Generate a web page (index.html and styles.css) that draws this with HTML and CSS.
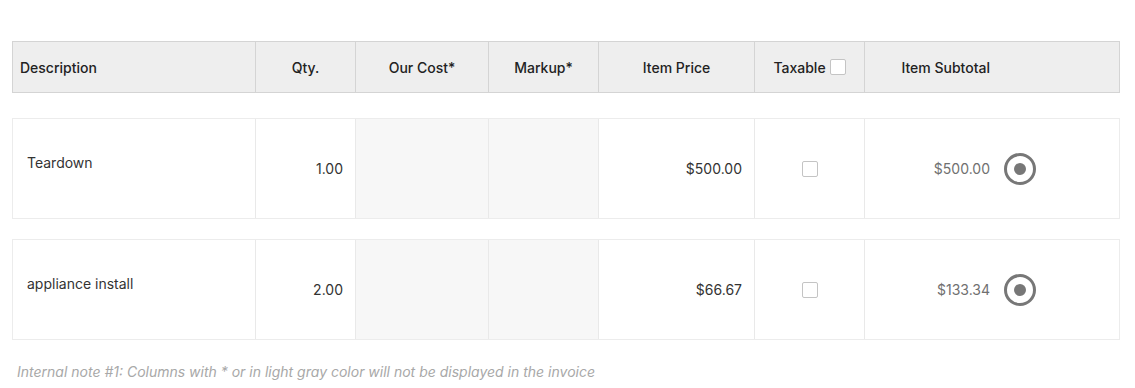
FILE: index.html
```
<!DOCTYPE html>
<html lang="en">
<head>
<meta charset="utf-8">
<title>Line Items</title>
<link rel="stylesheet" href="styles.css">
</head>
<body>

<div class="items">

	<div class="line head">
		<div class="cell desc">Description</div>
		<div class="cell center">Qty.</div>
		<div class="cell center">Our Cost*</div>
		<div class="cell center">Markup*</div>
		<div class="cell center">Item Price</div>
		<div class="cell center">Taxable <span class="box"></span></div>
		<div class="cell subtotal"><span class="amount">Item Subtotal</span></div>
	</div>

	<div class="line row">
		<div class="cell desc">Teardown</div>
		<div class="cell right">1.00</div>
		<div class="cell internal"></div>
		<div class="cell internal"></div>
		<div class="cell right">$500.00</div>
		<div class="cell center"><span class="box"></span></div>
		<div class="cell subtotal">
			<span class="amount muted">$500.00</span>
			<svg class="radio" width="32" height="32" viewBox="0 0 32 32"><circle cx="16" cy="16" r="14.5" fill="none" stroke="#777" stroke-width="3"/><circle cx="16" cy="16" r="6" fill="#777"/></svg>
		</div>
	</div>

	<div class="line row">
		<div class="cell desc">appliance install</div>
		<div class="cell right">2.00</div>
		<div class="cell internal"></div>
		<div class="cell internal"></div>
		<div class="cell right">$66.67</div>
		<div class="cell center"><span class="box"></span></div>
		<div class="cell subtotal">
			<span class="amount muted">$133.34</span>
			<svg class="radio" width="32" height="32" viewBox="0 0 32 32"><circle cx="16" cy="16" r="14.5" fill="none" stroke="#777" stroke-width="3"/><circle cx="16" cy="16" r="6" fill="#777"/></svg>
		</div>
	</div>

	<p class="note">Internal note #1: Columns with * or in light gray color will not be displayed in the invoice</p>

</div>

</body>
</html>
```

FILE: styles.css
```
html, body {
	margin: 0;
	background: #ffffff;
	font-family: Inter, "Liberation Sans", sans-serif;
	font-size: 14px;
	color: #333333;
}

* {
	box-sizing: border-box;
}

.items {
	padding: 41px 15px 0 12px;
}

.line {
	display: grid;
	grid-template-columns: 242px 100px 133px 110px 156px 110px 1fr;
}

.line .cell {
	display: flex;
	align-items: center;
	border-left: 1px solid #e9e9e9;
}

.line .cell:first-child {
	border-left: 0;
}

.head {
	height: 52px;
	background: #eeeeee;
	border: 1px solid #d4d4d4;
	font-weight: 500;
	color: #222222;
}

.head .cell {
	border-left-color: #d4d4d4;
}

.row {
	height: 101px;
	border: 1px solid #ececec;
	margin-top: 20px;
}

.head + .row {
	margin-top: 25px;
}

.cell.desc {
	padding-left: 7px;
}

.row .cell.desc {
	padding-left: 14px;
	padding-bottom: 13px;
}

.cell.center {
	justify-content: center;
}

.cell.right {
	justify-content: flex-end;
	padding-right: 12px;
}

.cell.internal {
	background: #f7f7f7;
}

.cell.subtotal {
	gap: 14px;
}

.subtotal .amount {
	flex: 0 0 125px;
	text-align: right;
}

.amount.muted {
	color: #707070;
}

.box {
	display: inline-block;
	width: 16px;
	height: 16px;
	margin-left: 4px;
	background: #ffffff;
	border: 1px solid #c4c4c4;
	border-radius: 2px;
}

.row .box {
	margin-left: 0;
}

.radio {
	display: block;
}

.note {
	margin: 23px 0 0 5px;
	font-style: italic;
	color: #a8a8a8;
}
```
